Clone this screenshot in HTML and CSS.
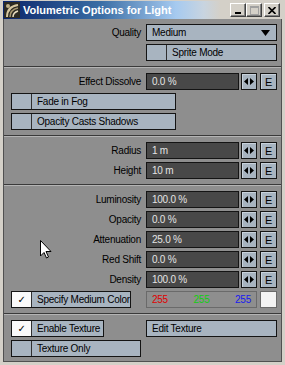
FILE: index.html
```html
<!DOCTYPE html>
<html lang="en">
<head>
  <meta charset="UTF-8" />
  <title>Volumetric Options for Light</title>
  <link rel="stylesheet" href="styles.css">
</head>
<body>
  <div class="window">
    <div class="titlebar">
      <svg class="app-icon" width="16" height="16" viewBox="0 0 16 16">
        <rect width="16" height="16" fill="#2c2a22"/>
        <path d="M3 15 C3 8 7 4 14 3" stroke="#d8c8a0" stroke-width="2" fill="none"/>
        <path d="M6 15 C6 10 9 7 14 6" stroke="#a89870" stroke-width="1.5" fill="none"/>
        <path d="M9 15 C9 12 11 10 14 9" stroke="#e8dcc0" stroke-width="1.5" fill="none"/>
        <circle cx="4" cy="4" r="2" fill="#c0b088"/>
      </svg>
      <span class="title">Volumetric Options for Light</span>
      <div class="caption-buttons">
        <span class="cap-btn"><svg width="8" height="7" viewBox="0 0 8 7"><rect x="1" y="5" width="6" height="2" fill="#000"/></svg></span>
        <span class="cap-btn"><svg width="9" height="9" viewBox="0 0 9 9"><rect x="0.5" y="0.5" width="8" height="8" fill="none" stroke="#a0a0a0"/><rect x="0" y="1" width="9" height="1" fill="#a0a0a0"/></svg></span>
        <span class="cap-btn close"><svg width="8" height="7" viewBox="0 0 8 7"><path d="M0.5 0 L7.5 7 M7.5 0 L0.5 7" stroke="#000" stroke-width="1.6"/></svg></span>
      </div>
    </div>

    <div class="panel">
      <div class="section">
        <div class="row">
          <span class="label">Quality</span>
          <div class="popup">Medium
            <svg width="9" height="6" viewBox="0 0 9 6"><path d="M0 0 H9 L4.5 6 Z" fill="#000"/></svg>
          </div>
        </div>
        <div class="row">
          <span class="label"></span>
          <div class="toggle wide"><span class="check"></span><span class="toggle-text">Sprite Mode</span></div>
        </div>
      </div>

      <div class="section">
        <div class="row">
          <span class="label">Effect Dissolve</span>
          <div class="field">0.0 %</div>
          <span class="arrows"><svg width="10" height="7" viewBox="0 0 10 7"><path d="M0 3.5 L4 0 V7 Z M10 3.5 L6 0 V7 Z" fill="#000"/></svg></span>
          <span class="env">E</span>
        </div>
        <div class="row">
          <div class="toggle long"><span class="check"></span><span class="toggle-text">Fade in Fog</span></div>
        </div>
        <div class="row">
          <div class="toggle long"><span class="check"></span><span class="toggle-text">Opacity Casts Shadows</span></div>
        </div>
      </div>

      <div class="section">
        <div class="row">
          <span class="label">Radius</span>
          <div class="field">1 m</div>
          <span class="arrows"><svg width="10" height="7" viewBox="0 0 10 7"><path d="M0 3.5 L4 0 V7 Z M10 3.5 L6 0 V7 Z" fill="#000"/></svg></span>
          <span class="env">E</span>
        </div>
        <div class="row">
          <span class="label">Height</span>
          <div class="field">10 m</div>
          <span class="arrows"><svg width="10" height="7" viewBox="0 0 10 7"><path d="M0 3.5 L4 0 V7 Z M10 3.5 L6 0 V7 Z" fill="#000"/></svg></span>
          <span class="env">E</span>
        </div>
      </div>

      <div class="section">
        <div class="row">
          <span class="label">Luminosity</span>
          <div class="field">100.0 %</div>
          <span class="arrows"><svg width="10" height="7" viewBox="0 0 10 7"><path d="M0 3.5 L4 0 V7 Z M10 3.5 L6 0 V7 Z" fill="#000"/></svg></span>
          <span class="env">E</span>
        </div>
        <div class="row">
          <span class="label">Opacity</span>
          <div class="field">0.0 %</div>
          <span class="arrows"><svg width="10" height="7" viewBox="0 0 10 7"><path d="M0 3.5 L4 0 V7 Z M10 3.5 L6 0 V7 Z" fill="#000"/></svg></span>
          <span class="env">E</span>
        </div>
        <div class="row">
          <span class="label">Attenuation</span>
          <div class="field">25.0 %</div>
          <span class="arrows"><svg width="10" height="7" viewBox="0 0 10 7"><path d="M0 3.5 L4 0 V7 Z M10 3.5 L6 0 V7 Z" fill="#000"/></svg></span>
          <span class="env">E</span>
        </div>
        <div class="row">
          <span class="label">Red Shift</span>
          <div class="field">0.0 %</div>
          <span class="arrows"><svg width="10" height="7" viewBox="0 0 10 7"><path d="M0 3.5 L4 0 V7 Z M10 3.5 L6 0 V7 Z" fill="#000"/></svg></span>
          <span class="env">E</span>
        </div>
        <div class="row">
          <span class="label">Density</span>
          <div class="field">100.0 %</div>
          <span class="arrows"><svg width="10" height="7" viewBox="0 0 10 7"><path d="M0 3.5 L4 0 V7 Z M10 3.5 L6 0 V7 Z" fill="#000"/></svg></span>
          <span class="env">E</span>
        </div>
        <div class="row">
          <div class="toggle medium-color"><span class="check on">&#10003;</span><span class="toggle-text">Specify Medium Color</span></div>
          <div class="color-field">
            <span class="red">255</span>
            <span class="green">255</span>
            <span class="blue">255</span>
          </div>
          <span class="swatch"></span>
        </div>
      </div>

      <div class="section">
        <div class="row">
          <div class="toggle enable"><span class="check on">&#10003;</span><span class="toggle-text">Enable Texture</span></div>
          <div class="button edit">Edit Texture</div>
        </div>
        <div class="row">
          <div class="toggle only"><span class="check"></span><span class="toggle-text">Texture Only</span></div>
        </div>
      </div>
    </div>

    <svg class="cursor" width="12" height="19" viewBox="0 0 12 19">
      <path d="M0.5 0.5 V16 L4 12.5 L6.5 18 L8.5 17 L6 11.5 H11 Z" fill="#fff" stroke="#000" stroke-width="1"/>
    </svg>
  </div>
</body>
</html>
```

FILE: styles.css
```css
body {
  margin: 0;
  padding: 0;
  background: #d4d0c8;
}
.window {
  position: relative;
  width: 285px;
  height: 365px;
  box-sizing: border-box;
  padding: 1px 3px 0 3px;
  background: #d4d0c8;
  font-family: "Liberation Sans", Arial, sans-serif;
  font-size: 10px;
  letter-spacing: -0.25px;
  color: #000;
}
.titlebar {
  display: flex;
  align-items: center;
  height: 18px;
  padding-left: 1px;
  background: linear-gradient(to right, #0a246a 0%, #3a6ea5 35%, #a6caf0 62%, #c8d4e0 72%, #d4d0c8 78%);
}
.app-icon {
  flex: none;
}
.title {
  margin-left: 3px;
  font-weight: bold;
  font-size: 11px;
  letter-spacing: 0;
  color: #fff;
  flex: 1;
}
.caption-buttons {
  display: flex;
  margin-right: 2px;
}
.cap-btn {
  width: 16px;
  height: 14px;
  box-sizing: border-box;
  display: flex;
  align-items: center;
  justify-content: center;
  background: #d4d0c8;
  border: 1px solid;
  border-color: #fff #404040 #404040 #fff;
  box-shadow: inset -1px -1px 0 #808080;
}
.cap-btn.close {
  margin-left: 2px;
}
.panel {
  height: 343px;
  box-sizing: border-box;
  border: 1px solid #505050;
  border-top: none;
  background: #8e8e8e;
}
.section {
  padding: 5px 3px 5px 7px;
}
.section + .section {
  padding-top: 6px;
  border-top: 1px solid #3a3a3a;
  box-shadow: inset 0 1px 0 #b4b4b4;
}
.row {
  display: flex;
  align-items: center;
  height: 17px;
  margin-top: 3px;
}
.row:first-child {
  margin-top: 0;
}
.label {
  width: 130px;
  margin-right: 5px;
  text-align: right;
  white-space: nowrap;
}
.field {
  width: 93px;
  height: 17px;
  box-sizing: border-box;
  border: 1px solid #141414;
  background: #484848;
  color: #e4e4e4;
  padding-left: 5px;
  line-height: 15px;
}
.arrows, .env {
  height: 17px;
  box-sizing: border-box;
  display: flex;
  align-items: center;
  justify-content: center;
  background: #a8b4c0;
  border: 1px solid #141414;
  box-shadow: inset 1px 1px 0 #c8d2dc;
}
.arrows {
  width: 16px;
  margin-left: 2px;
}
.env {
  width: 17px;
  margin-left: 3px;
  font-size: 11px;
}
.popup {
  width: 131px;
  height: 17px;
  box-sizing: border-box;
  display: flex;
  align-items: center;
  justify-content: space-between;
  padding: 0 6px 0 5px;
  border: 1px solid #141414;
  background: #a8b4c0;
}
.toggle {
  display: flex;
  height: 17px;
  box-sizing: border-box;
  border: 1px solid #141414;
  background: #a8b4c0;
  overflow: hidden;
}
.toggle.wide {
  width: 131px;
}
.toggle.long {
  width: 165px;
}
.toggle.medium-color {
  width: 120px;
  margin-right: 15px;
}
.toggle.enable {
  width: 93px;
  margin-right: 42px;
}
.toggle.only {
  width: 130px;
}
.check {
  width: 19px;
  flex: none;
  border-right: 1px solid #303030;
  display: flex;
  align-items: center;
  justify-content: center;
  font-family: "DejaVu Sans", sans-serif;
  font-size: 10px;
}
.check.on {
  background: #fafafa;
}
.toggle-text {
  padding-left: 5px;
  line-height: 15px;
  white-space: nowrap;
}
.button {
  height: 17px;
  box-sizing: border-box;
  border: 1px solid #141414;
  background: #a8b4c0;
  padding-left: 5px;
  line-height: 15px;
}
.button.edit {
  width: 131px;
}
.color-field {
  width: 111px;
  height: 17px;
  box-sizing: border-box;
  display: flex;
  justify-content: space-between;
  padding: 0 5px;
  border: 1px solid #6a6a6a;
  line-height: 15px;
}
.red { color: #e00000; }
.green { color: #10d010; }
.blue { color: #1818f0; }
.swatch {
  width: 17px;
  height: 17px;
  box-sizing: border-box;
  margin-left: 3px;
  border: 1px solid #6a6a6a;
  background: #f4f4f4;
}
.cursor {
  position: absolute;
  left: 40px;
  top: 240px;
}
```
